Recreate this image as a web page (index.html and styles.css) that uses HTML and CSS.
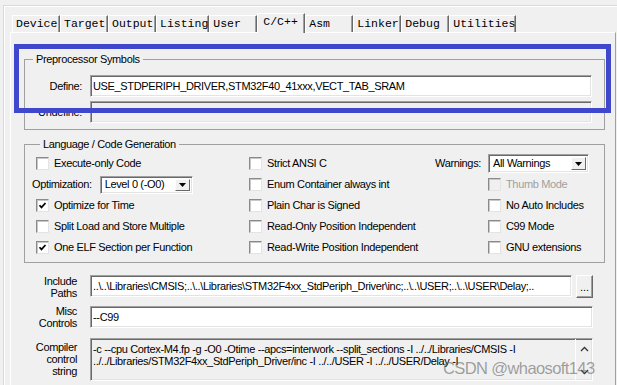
FILE: index.html
```html
<!DOCTYPE html>
<html lang="en">

<head>
    <meta charset="UTF-8" />
    <title>Options for Target - C/C++</title>
    <link rel="stylesheet" href="styles.css">
</head>

<body>
    <div class="dialog">
        <div class="tabs">
            <span class="tab">Device</span>
            <span class="tab">Target</span>
            <span class="tab">Output</span>
            <span class="tab">Listing</span>
            <span class="tab">User</span>
            <span class="tab active">C/C++</span>
            <span class="tab">Asm</span>
            <span class="tab">Linker</span>
            <span class="tab">Debug</span>
            <span class="tab">Utilities</span>
        </div>

        <div class="panel">
            <fieldset class="group group-pre">
                <legend>Preprocessor Symbols</legend>
                <div class="field-row">
                    <label>Define:</label>
                    <div class="edit">USE_STDPERIPH_DRIVER,STM32F40_41xxx,VECT_TAB_SRAM</div>
                </div>
                <div class="field-row">
                    <label>Undefine:</label>
                    <div class="edit disabled"></div>
                </div>
            </fieldset>

            <fieldset class="group group-lang">
                <legend>Language / Code Generation</legend>
                <div class="opts">
                    <label class="check col1"><span class="box"></span>Execute-only Code</label>
                    <label class="check"><span class="box"></span>Strict ANSI C</label>
                    <span class="opt-label">Warnings:</span>
                    <div class="combo combo-warn"><span class="combo-text">All Warnings</span><span class="drop"><svg width="7" height="4" viewBox="0 0 7 4"><path d="M0 0h7L3.5 4z" fill="#000"/></svg></span></div>

                    <div class="optim"><span>Optimization:</span>
                        <div class="combo combo-level"><span class="combo-text">Level 0 (-O0)</span><span class="drop"><svg width="7" height="4" viewBox="0 0 7 4"><path d="M0 0h7L3.5 4z" fill="#000"/></svg></span></div>
                    </div>
                    <label class="check"><span class="box"></span>Enum Container always int</label>
                    <span></span>
                    <label class="check off"><span class="box"></span>Thumb Mode</label>

                    <label class="check col1"><span class="box"><svg width="9" height="9" viewBox="0 0 9 9"><path d="M1.5 4.2l2 2.2 4-4.4" fill="none" stroke="#000" stroke-width="1.7"/></svg></span>Optimize for Time</label>
                    <label class="check"><span class="box"></span>Plain Char is Signed</label>
                    <span></span>
                    <label class="check"><span class="box"></span>No Auto Includes</label>

                    <label class="check col1"><span class="box"></span>Split Load and Store Multiple</label>
                    <label class="check"><span class="box"></span>Read-Only Position Independent</label>
                    <span></span>
                    <label class="check"><span class="box"></span>C99 Mode</label>

                    <label class="check col1"><span class="box"><svg width="9" height="9" viewBox="0 0 9 9"><path d="M1.5 4.2l2 2.2 4-4.4" fill="none" stroke="#000" stroke-width="1.7"/></svg></span>One ELF Section per Function</label>
                    <label class="check"><span class="box"></span>Read-Write Position Independent</label>
                    <span></span>
                    <label class="check"><span class="box"></span>GNU extensions</label>
                </div>
            </fieldset>

            <div class="paths">
                <label class="path-label">Include<br>Paths</label>
                <div class="edit path-include">..\..\Libraries\CMSIS;..\..\Libraries\STM32F4xx_StdPeriph_Driver\inc;..\..\USER;..\..\USER\Delay;..</div>
                <span></span>
                <button class="dots">...</button>

                <label class="path-label">Misc<br>Controls</label>
                <div class="edit path-misc">--C99</div>

                <label class="path-label row-compiler">Compiler<br>control<br>string</label>
                <div class="edit compile row-compiler">
                    <div class="compile-text">-c --cpu Cortex-M4.fp -g -O0 -Otime --apcs=interwork --split_sections -I ../../Libraries/CMSIS -I<br>../../Libraries/STM32F4xx_StdPeriph_Driver/inc -I ../../USER -I ../../USER/Delay -I</div>
                    <div class="scroll">
                        <svg width="9" height="6" viewBox="0 0 9 6"><path d="M1 5l3.5-3.5L8 5" fill="none" stroke="#333" stroke-width="1.3"/></svg>
                        <svg width="9" height="6" viewBox="0 0 9 6"><path d="M1 1l3.5 3.5L8 1" fill="none" stroke="#333" stroke-width="1.3"/></svg>
                    </div>
                </div>
            </div>
        </div>
    </div>

    <!-- annotation drawn over the dialog -->
    <div class="highlight"></div>
    <div class="watermark">CSDN @whaosoft143</div>
</body>

</html>
```

FILE: styles.css
```css
* {
margin: 0;
padding: 0;
box-sizing: border-box;
}

body {
position: relative;
width: 617px;
height: 385px;
overflow: hidden;
background: #f0f0f0;
color: #000;
font: 11px/13px "Liberation Sans", Arial, sans-serif;
letter-spacing: -0.35px;
}

.dialog {
margin: 5px 0 0 3px;
height: 380px;
border-top: 1px solid #dadada;
border-left: 1px solid #dadada;
box-shadow: inset 1px 1px #fff;
}

/* tab strip */
.tabs {
display: flex;
align-items: flex-end;
height: 26px;
padding-left: 8px;
}

.tab {
position: relative;
height: 17px;
min-width: 48px;
padding-left: 3px;
border-top: 1px solid #fff;
border-left: 1px solid #fff;
border-right: 1px solid #696969;
box-shadow: inset -1px 0 #a0a0a0;
font: 11.5px/16px "Liberation Mono", "Courier New", monospace;
letter-spacing: 0;
white-space: nowrap;
}

.tab.active {
z-index: 1;
height: 20px;
margin-bottom: -1px;
padding-left: 5px;
background: #f0f0f0;
line-height: 16px;
}

.panel {
height: 353px;
margin: 0 1px 0 6px;
border-top: 1px solid #fff;
border-left: 1px solid #fff;
border-right: 1px solid #a0a0a0;
}

/* group boxes */
.group {
border: 1px solid #a0a0a0;
min-width: 0;
}

.group legend {
margin-left: 8px;
padding: 0 3px;
line-height: 14px;
}

.group-pre {
margin: 19px 10px 0 13px;
padding: 9px 12px 6px 0;
}

.group-lang {
margin: 7px 10px 0 13px;
padding: 2px 0 4px 7px;
}

.field-row {
display: grid;
grid-template-columns: 57px 1fr;
column-gap: 8px;
align-items: center;
height: 22px;
}

.field-row + .field-row {
margin-top: 4px;
}

.field-row label {
text-align: right;
}

/* sunken edit box */
.edit {
height: 22px;
padding-left: 2px;
line-height: 20px;
background: #fff;
border: 1px solid;
border-color: #a0a0a0 #fff #fff #a0a0a0;
box-shadow: inset 1px 1px #696969, inset -1px -1px #e3e3e3;
white-space: nowrap;
overflow: hidden;
}

.edit.disabled {
background: #f0f0f0;
}

/* language options */
.opts {
display: grid;
grid-template-columns: 217px 185px 54px 1fr;
grid-auto-rows: 21px;
align-items: center;
}

.check {
display: flex;
align-items: center;
gap: 5px;
white-space: nowrap;
}

.check.col1 {
margin-left: 4px;
}

.box {
display: flex;
align-items: center;
justify-content: center;
width: 13px;
height: 13px;
background: #fff;
border: 1px solid;
border-color: #8a8a8a #e3e3e3 #e3e3e3 #8a8a8a;
box-shadow: inset 1px 1px #c8c8c8;
}

.check.off {
color: #a0a0a0;
}

.check.off .box {
background: #f0f0f0;
}

.opt-label {
padding-right: 7px;
text-align: right;
}

.optim {
display: flex;
align-items: center;
gap: 8px;
}

.combo {
display: flex;
align-items: center;
justify-content: space-between;
background: #fff;
border: 1px solid;
border-color: #a0a0a0 #fff #fff #a0a0a0;
box-shadow: inset 1px 1px #696969, inset -1px -1px #e3e3e3;
padding: 2px;
}

.combo-level {
width: 93px;
height: 18px;
}

.combo-warn {
width: 101px;
height: 19px;
}

.combo-text {
padding-left: 2px;
white-space: nowrap;
}

.drop {
display: flex;
align-items: center;
justify-content: center;
width: 15px;
height: 100%;
background: #f0f0f0;
border: 1px solid;
border-color: #fff #696969 #696969 #fff;
}

/* include / misc / compiler rows */
.paths {
display: grid;
grid-template-columns: 79px 482px 4px 17px;
grid-template-rows: 23px 22px 43px;
row-gap: 8px;
margin-top: 12px;
}

.path-label {
align-self: center;
padding-right: 13px;
line-height: 12px;
text-align: right;
}

.path-include {
align-self: start;
}

.path-misc {
grid-column: 2 / 5;
}

.dots {
height: 23px;
background: #f0f0f0;
border: 1px solid;
border-color: #fff #696969 #696969 #fff;
box-shadow: inset -1px -1px #a0a0a0;
font: 11px/14px "Liberation Sans", Arial, sans-serif;
}

.row-compiler {
margin-top: 2px;
}

.compile {
grid-column: 2 / 5;
height: 43px;
display: grid;
grid-template-columns: 1fr 17px;
padding-left: 0;
background: #f0f0f0;
}

.compile-text {
padding: 4px 0 0 2px;
line-height: 12px;
overflow: hidden;
}

.scroll {
display: flex;
flex-direction: column;
align-items: center;
justify-content: space-between;
padding: 7px 0 5px;
border-left: 1px solid #fff;
}

/* blue annotation frame */
.highlight {
position: absolute;
left: 14px;
top: 44px;
width: 597px;
height: 69px;
border: 5px solid #3f48cc;
}

.watermark {
position: absolute;
left: 443px;
top: 358px;
color: rgba(100, 100, 100, 0.6);
font: 16.5px/20px "Liberation Sans", Arial, sans-serif;
letter-spacing: -0.6px;
white-space: nowrap;
}
```
